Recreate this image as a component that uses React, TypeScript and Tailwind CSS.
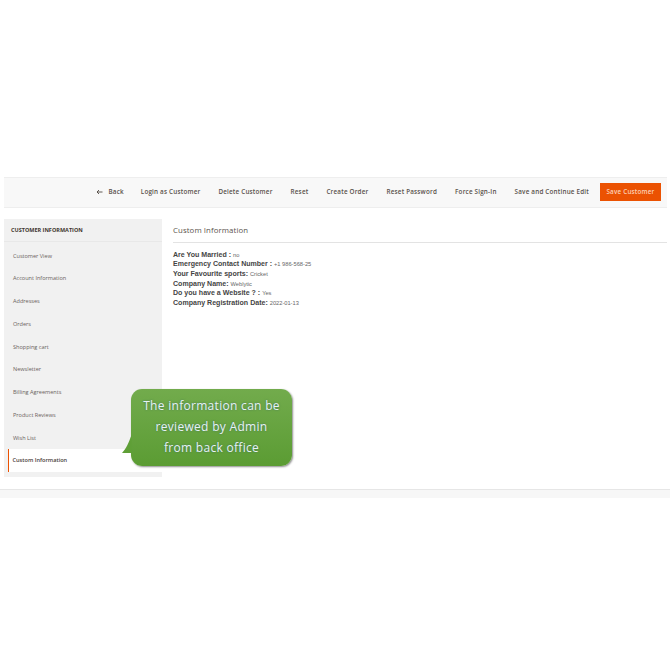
import React from 'react';

const actions = ['Login as Customer', 'Delete Customer', 'Reset', 'Create Order', 'Reset Password', 'Force Sign-In'];

const menu = ['Customer View', 'Account Information', 'Addresses', 'Orders', 'Shopping cart', 'Newsletter', 'Billing Agreements', 'Product Reviews', 'Wish List'];

const details = [
    { label: 'Are You Married :', value: 'no' },
    { label: 'Emergency Contact Number :', value: '+1 986-568-25' },
    { label: 'Your Favourite sports:', value: 'Cricket' },
    { label: 'Company Name:', value: 'Weblytic' },
    { label: 'Do you have a Website ? :', value: 'Yes' },
    { label: 'Company Registration Date:', value: '2022-01-13' }
];

export default function App() {
    return (
        <div className="relative w-[670px] h-[670px] bg-white overflow-hidden font-['Open_Sans',sans-serif] text-[#41362f]">
            <div className="pt-[177px] pl-1 pr-[3px]">
                <div className="h-[31px] pb-[1px] flex items-center justify-end bg-[#f8f8f8] border-y border-[#eeeeee] pr-[6px]">
                    <button className="flex items-center mr-[17px] text-[6.3px] font-semibold text-[#5a524c] tracking-[0.2px]">
                        <svg width="7" height="6" viewBox="0 0 7 6" className="mr-[5px]" fill="none" stroke="#514943" strokeWidth="0.9">
                            <path d="M6.5 3H1M3 1L1 3L3 5" />
                        </svg>
                        Back
                    </button>
                    {actions.map(a => (
                        <button key={a} className="mr-[18px] text-[6.3px] font-semibold text-[#5a524c] tracking-[0.2px] whitespace-nowrap">
                            {a}
                        </button>
                    ))}
                    <button className="mr-[11px] text-[6.3px] font-semibold text-[#5a524c] tracking-[0.2px] whitespace-nowrap">
                        Save and Continue Edit
                    </button>
                    <button className="w-[61px] h-[18px] bg-[#eb5202] text-[6.3px] font-semibold text-[#fbd0b8] tracking-[0.2px] whitespace-nowrap">
                        Save Customer
                    </button>
                </div>
                <div className="flex mt-[11px]">
                    <div className="w-[157.5px] h-[258px] shrink-0 bg-[#f1f1f1]">
                        <div className="h-[23px] flex items-center pl-[7px] text-[5.5px] font-bold text-[#41362f] border-b border-[#e8e8e8]">
                            CUSTOMER INFORMATION
                        </div>
                        <div className="flex flex-col pl-[4px] pt-[2.5px]">
                            {menu.map(m => (
                                <div key={m} className="h-[22.75px] flex items-center pl-[5px] text-[5.55px] text-[#6a625d]">
                                    {m}
                                </div>
                            ))}
                            <div className="h-[23px] pb-[1px] flex items-center pl-[3.5px] bg-white border-l-[1.5px] border-[#eb5202] text-[5.6px] font-semibold text-[#4a403a]">
                                Custom Information
                            </div>
                        </div>
                    </div>
                    <div className="flex-1 pl-[11.5px]">
                        <div className="h-[24px] flex items-center text-[7.8px] text-[#5a534d] tracking-[0.1px] border-b border-[#e3e3e3]">
                            Custom Information
                        </div>
                        <div className="mt-[7px] font-['Liberation_Sans',sans-serif] text-[#444444]">
                            {details.map(d => (
                                <div key={d.label} className="h-[9.7px] flex items-center whitespace-pre">
                                    <span className="text-[7.05px] font-bold">{d.label} </span>
                                    <span className="text-[5.7px] text-[#666666]">{d.value}</span>
                                </div>
                            ))}
                        </div>
                    </div>
                </div>
                <div className="h-[9px] mt-3 -mx-1 bg-[#f7f7f7] border-t border-[#e6e6e6]"></div>
            </div>
            <div className="absolute left-[131px] top-[389px] w-[161px] h-[77px] pb-[3px] rounded-[11px] bg-gradient-to-b from-[#72ab4c] to-[#5b9c33] shadow-[1px_1px_2px_rgba(0,0,0,0.45)] flex flex-col items-center justify-center text-[12px] font-medium leading-[21px] tracking-[0.3px] text-[#e6f2f5] [text-shadow:0_0_2px_#3f6f5a]">
                <div>The information can be</div>
                <div>reviewed by Admin</div>
                <div>from back office</div>
                <svg width="10" height="19" viewBox="0 0 10 19" className="absolute left-[-9px] top-[46px]">
                    <path d="M9.5 0L9.5 18L0 18C4 14 7 7 9.5 0Z" fill="#5f9f37" />
                </svg>
            </div>
        </div>
    );
}
